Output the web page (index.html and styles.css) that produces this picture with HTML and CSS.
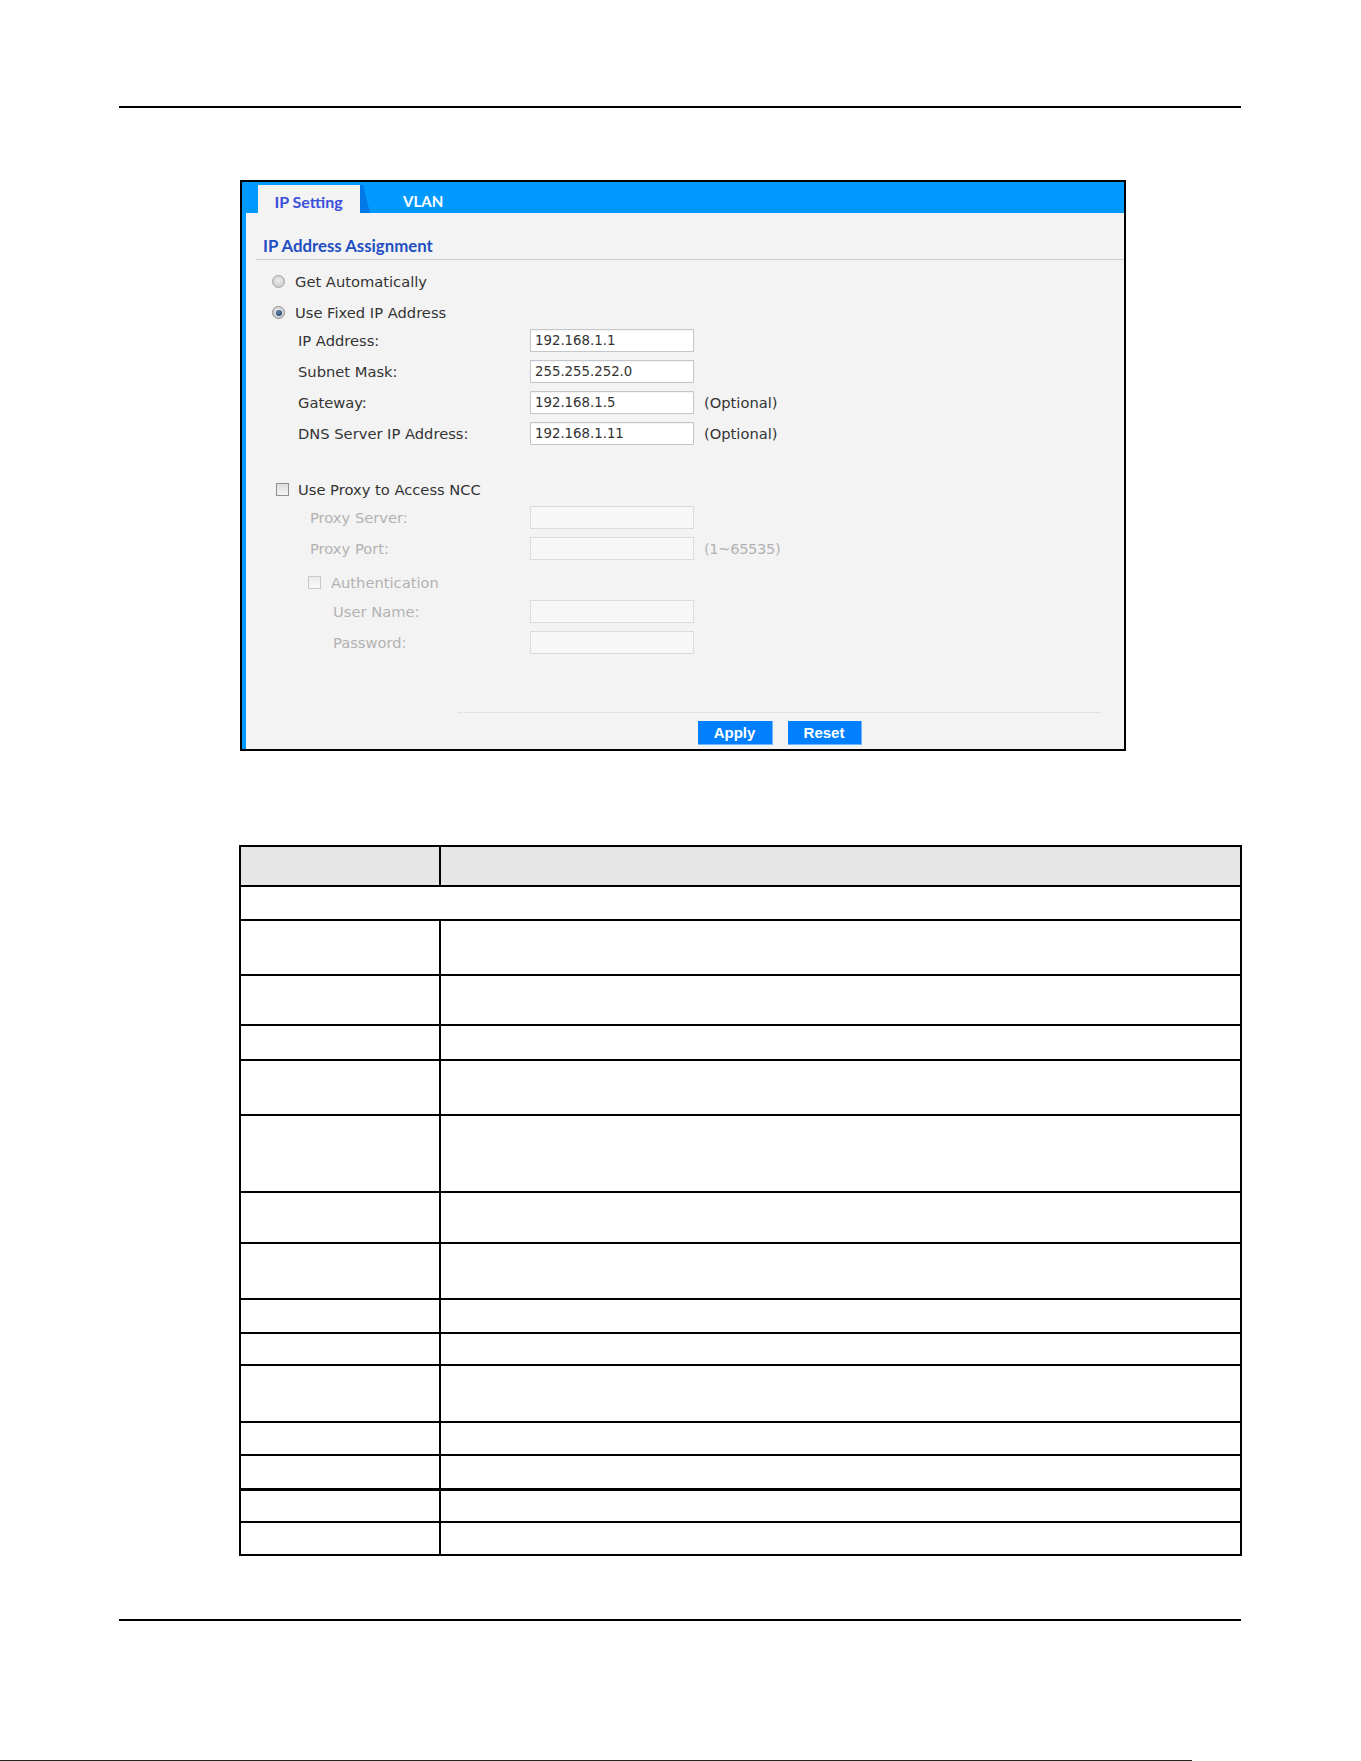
FILE: index.html
```html
<!DOCTYPE html>
<html lang="en">
<head>
<meta charset="utf-8">
<title>IP Setting</title>
<link rel="stylesheet" href="styles.css">
</head>
<body>
  <div class="rule rule-top"></div>

  <div class="figure">
    <div class="tabbar">
      <div class="tab">IP Setting</div>
      <div class="tab-edge"></div>
      <div class="tab-label">VLAN</div>
    </div>

    <div class="panel">
      <div class="section-title">IP Address Assignment</div>

      <div class="choice choice-first">
        <span class="radio"></span>
        <span>Get Automatically</span>
      </div>
      <div class="choice choice-second">
        <span class="radio checked"></span>
        <span>Use Fixed IP Address</span>
      </div>

      <div class="field">
        <span class="label">IP Address:</span>
        <span class="input">192.168.1.1</span>
      </div>
      <div class="field">
        <span class="label">Subnet Mask:</span>
        <span class="input">255.255.252.0</span>
      </div>
      <div class="field">
        <span class="label">Gateway:</span>
        <span class="input">192.168.1.5</span>
        <span class="note">(Optional)</span>
      </div>
      <div class="field">
        <span class="label">DNS Server IP Address:</span>
        <span class="input">192.168.1.11</span>
        <span class="note">(Optional)</span>
      </div>

      <div class="check proxy-check">
        <span class="box"></span>
        <span>Use Proxy to Access NCC</span>
      </div>
      <div class="field disabled">
        <span class="label indent1">Proxy Server:</span>
        <span class="input"></span>
      </div>
      <div class="field disabled">
        <span class="label indent1">Proxy Port:</span>
        <span class="input"></span>
        <span class="note range">(1~65535)</span>
      </div>
      <div class="check auth-check disabled">
        <span class="box"></span>
        <span>Authentication</span>
      </div>
      <div class="field disabled">
        <span class="label indent2">User Name:</span>
        <span class="input"></span>
      </div>
      <div class="field disabled">
        <span class="label indent2">Password:</span>
        <span class="input"></span>
      </div>

      <div class="actions">
        <button class="btn btn-apply">Apply</button>
        <button class="btn btn-reset">Reset</button>
      </div>
    </div>
  </div>

  <table class="desc-table">
    <colgroup>
      <col class="col-label">
      <col>
    </colgroup>
    <tr class="head h40"><td></td><td></td></tr>
    <tr class="h34"><td colspan="2"></td></tr>
    <tr class="h55"><td></td><td></td></tr>
    <tr class="h50"><td></td><td></td></tr>
    <tr class="h35"><td></td><td></td></tr>
    <tr class="h55"><td></td><td></td></tr>
    <tr class="h77"><td></td><td></td></tr>
    <tr class="h51"><td></td><td></td></tr>
    <tr class="h56"><td></td><td></td></tr>
    <tr class="h34"><td></td><td></td></tr>
    <tr class="h32"><td></td><td></td></tr>
    <tr class="h57"><td></td><td></td></tr>
    <tr class="h33"><td></td><td></td></tr>
    <tr class="h35 heavy"><td></td><td></td></tr>
    <tr class="h32"><td></td><td></td></tr>
    <tr class="h33"><td></td><td></td></tr>
  </table>

  <div class="rule rule-bottom"></div>
  <div class="page-edge"></div>
</body>
</html>
```

FILE: styles.css
```css
* {
  box-sizing: border-box;
}

html,
body {
  margin: 0;
  padding: 0;
}

body {
  background: #fff;
  display: flex;
  flex-direction: column;
  align-items: flex-start;
  font-family: "DejaVu Sans", "Liberation Sans", sans-serif;
  font-size: 14.7px;
  color: #333;
}

/* page rules */
.rule {
  border-top: 2px solid #000;
  width: 1122px;
  margin-left: 119px;
}

.rule-top {
  margin-top: 106px;
}

.rule-bottom {
  margin-top: 63px;
}

.page-edge {
  margin-top: 139px;
  width: 1192px;
  height: 1px;
  background: #222;
}

/* screenshot frame */
.figure {
  margin: 72px 0 0 240px;
  width: 886px;
  height: 571px;
  border: 2px solid #000;
  background: #f3f3f3;
  display: flex;
  flex-direction: column;
}

.tabbar {
  flex: none;
  height: 31px;
  background: #0099ff;
  display: flex;
  align-items: flex-end;
  padding-left: 16px;
}

.tab,
.tab-label {
  height: 28px;
  display: flex;
  align-items: center;
  padding-top: 4px;
  font-family: Lato, "DejaVu Sans", sans-serif;
  font-weight: 700;
  font-size: 16px;
}

.tab {
  width: 102px;
  justify-content: center;
  padding-right: 1px;
  background: #f3f3f3;
  color: #3a4fdc;
}

.tab-edge {
  width: 10px;
  height: 28px;
  background: #0079e6;
  clip-path: polygon(0 0, 30% 0, 100% 100%, 0 100%);
}

.tab-label {
  margin-left: 33px;
  font-size: 15px;
  color: #fff;
}

.panel {
  flex: 1;
  border-left: 4px solid #0099ff;
  display: flex;
  flex-direction: column;
}

.section-title {
  margin-left: 10px;
  padding: 22px 0 2px 7px;
  line-height: 22px;
  border-bottom: 1px solid #cdcdcd;
  font-family: Lato, "DejaVu Sans", sans-serif;
  font-weight: 700;
  font-size: 16.8px;
  color: #1f4fc2;
}

/* radio choices */
.choice {
  display: flex;
  align-items: center;
  gap: 10px;
  padding-left: 26px;
}

.choice-first {
  margin-top: 6px;
  height: 30px;
}

.choice-second {
  height: 29px;
  padding-top: 4px;
}

.radio {
  width: 13px;
  height: 13px;
  border-radius: 50%;
  border: 1px solid #a3a3a3;
  background: radial-gradient(circle at 50% 40%, #ececec 0, #cfcfcf 70%, #bdbdbd 100%);
  display: flex;
  align-items: center;
  justify-content: center;
  flex: none;
}

.radio.checked {
  border-color: #8c8c8c;
}

.radio.checked::before {
  content: "";
  width: 6px;
  height: 6px;
  border-radius: 50%;
  background: radial-gradient(circle at 40% 35%, #5c86b0 0, #24476c 80%);
}

/* label / input rows */
.field {
  display: grid;
  grid-template-columns: 232px 164px auto;
  align-items: center;
  height: 31px;
  margin-left: 52px;
}

.label.indent1 {
  padding-left: 12px;
}

.label.indent2 {
  padding-left: 35px;
}

.input {
  height: 23px;
  display: flex;
  align-items: center;
  padding: 0 0 1px 4px;
  background: #fff;
  border: 1px solid #c2c7cd;
  box-shadow: inset 0 1px 1px rgba(0, 0, 0, 0.05);
  font-size: 13.3px;
  color: #333;
}

.note {
  padding-left: 10px;
}

.note.range {
  letter-spacing: -0.4px;
}

.disabled {
  color: #b2b2b2;
}

.disabled .input {
  background: #f7f7f7;
  border-color: #dcdcdc;
  box-shadow: none;
}

/* checkboxes */
.check {
  display: flex;
  align-items: center;
}

.box {
  width: 13px;
  height: 13px;
  border: 1px solid #8e8e8e;
  background: linear-gradient(#dcdcdc, #f5f5f5);
  flex: none;
}

.proxy-check {
  margin-top: 27px;
  height: 26px;
  padding-left: 30px;
  gap: 9px;
}

.auth-check {
  height: 32px;
  padding: 5px 0 0 62px;
  gap: 10px;
}

.auth-check .box {
  border-color: #c9c9c9;
  background: linear-gradient(#ececec, #f8f8f8);
}

/* footer buttons */
.actions {
  margin: auto 23px 0 212px;
  padding: 8px 0 4px;
  border-top: 1px dotted #d0d0d0;
  display: flex;
  justify-content: center;
  gap: 15px;
}

.btn {
  height: 24px;
  border: none;
  border-right: 1px solid #6fb6ff;
  border-bottom: 1px solid #6fb6ff;
  background: #0080ff;
  color: #fff;
  font-family: "Liberation Sans", Arial, sans-serif;
  font-weight: 700;
  font-size: 15px;
  padding: 0;
}

.btn-apply {
  width: 75px;
}

.btn-reset {
  width: 74px;
}

/* description table */
.desc-table {
  margin: 94px 0 0 239px;
  width: 1003px;
  table-layout: fixed;
  border-collapse: separate;
  border-spacing: 0;
  border-top: 2px solid #000;
  border-left: 2px solid #000;
}

.col-label {
  width: 200px;
}

.desc-table td {
  padding: 0;
  border-right: 2px solid #000;
  border-bottom: 2px solid #000;
}

.desc-table .head td {
  background: #e6e6e6;
}

.desc-table .heavy td {
  border-bottom-width: 3px;
}

.h32 { height: 32px; }
.h33 { height: 33px; }
.h34 { height: 34px; }
.h35 { height: 35px; }
.h40 { height: 40px; }
.h50 { height: 50px; }
.h51 { height: 51px; }
.h55 { height: 55px; }
.h56 { height: 56px; }
.h57 { height: 57px; }
.h77 { height: 77px; }
```
